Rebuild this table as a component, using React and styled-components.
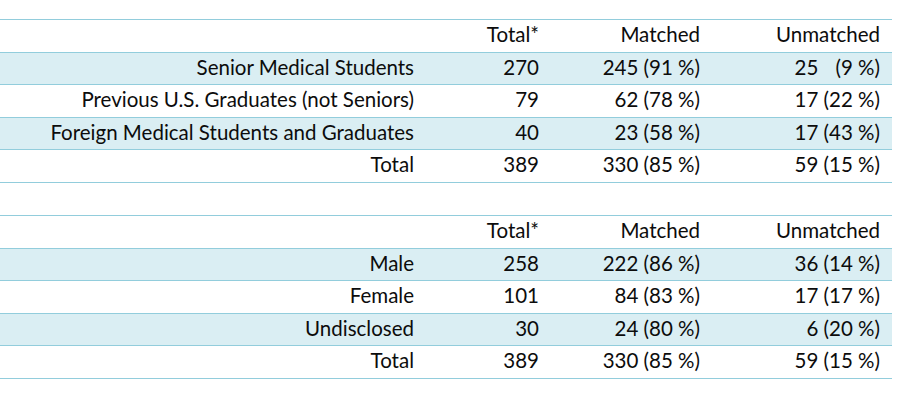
import React from "react";
import styled, { createGlobalStyle } from "styled-components";

const Global = createGlobalStyle`
  html, body { margin: 0; padding: 0; background: #ffffff; }
  body { font-family: Lato, "Open Sans", "Liberation Sans", sans-serif; color: #0c0c0c; }
`;

const Page = styled.div`
  width: 914px;
  height: 401px;
  padding-top: 19px;
  box-sizing: border-box;
  display: flex;
  flex-direction: column;
  gap: 32px;
`;

const Table = styled.div`
  width: 892px;
  border-top: 1px solid #92cddc;
  display: flex;
  flex-direction: column;
`;

const Row = styled.div`
  display: grid;
  grid-template-columns: 414px 125px 161px 180px 12px;
  height: 32.6px;
  box-sizing: border-box;
  border-bottom: 1px solid #92cddc;
  background: ${(p) => (p.$shaded ? "#daeef3" : "#ffffff")};
`;

const Cell = styled.div`
  display: flex;
  align-items: center;
  justify-content: flex-end;
  font-size: 20.5px;
  line-height: 1;
  white-space: pre;
  padding-bottom: 3px;
`;

const tables = [
  [
    ["Senior Medical Students", "270", "245 (91 %)", "25 \u2007(9 %)"],
    ["Previous U.S. Graduates (not Seniors)", "79", "62 (78 %)", "17 (22 %)"],
    ["Foreign Medical Students and Graduates", "40", "23 (58 %)", "17 (43 %)"],
    ["Total", "389", "330 (85 %)", "59 (15 %)"],
  ],
  [
    ["Male", "258", "222 (86 %)", "36 (14 %)"],
    ["Female", "101", "84 (83 %)", "17 (17 %)"],
    ["Undisclosed", "30", "24 (80 %)", "6 (20 %)"],
    ["Total", "389", "330 (85 %)", "59 (15 %)"],
  ],
];

function DataTable({ rows }) {
  return (
    <Table>
      <Row>
        <Cell />
        <Cell>Total*</Cell>
        <Cell>Matched</Cell>
        <Cell>Unmatched</Cell>
        <Cell />
      </Row>
      {rows.map((r, i) => (
        <Row key={i} $shaded={i % 2 === 0}>
          {r.map((c, j) => (
            <Cell key={j}>{c}</Cell>
          ))}
          <Cell />
        </Row>
      ))}
    </Table>
  );
}

export default function App() {
  return (
    <>
      <Global />
      <Page>
        {tables.map((t, i) => (
          <DataTable key={i} rows={t} />
        ))}
      </Page>
    </>
  );
}
